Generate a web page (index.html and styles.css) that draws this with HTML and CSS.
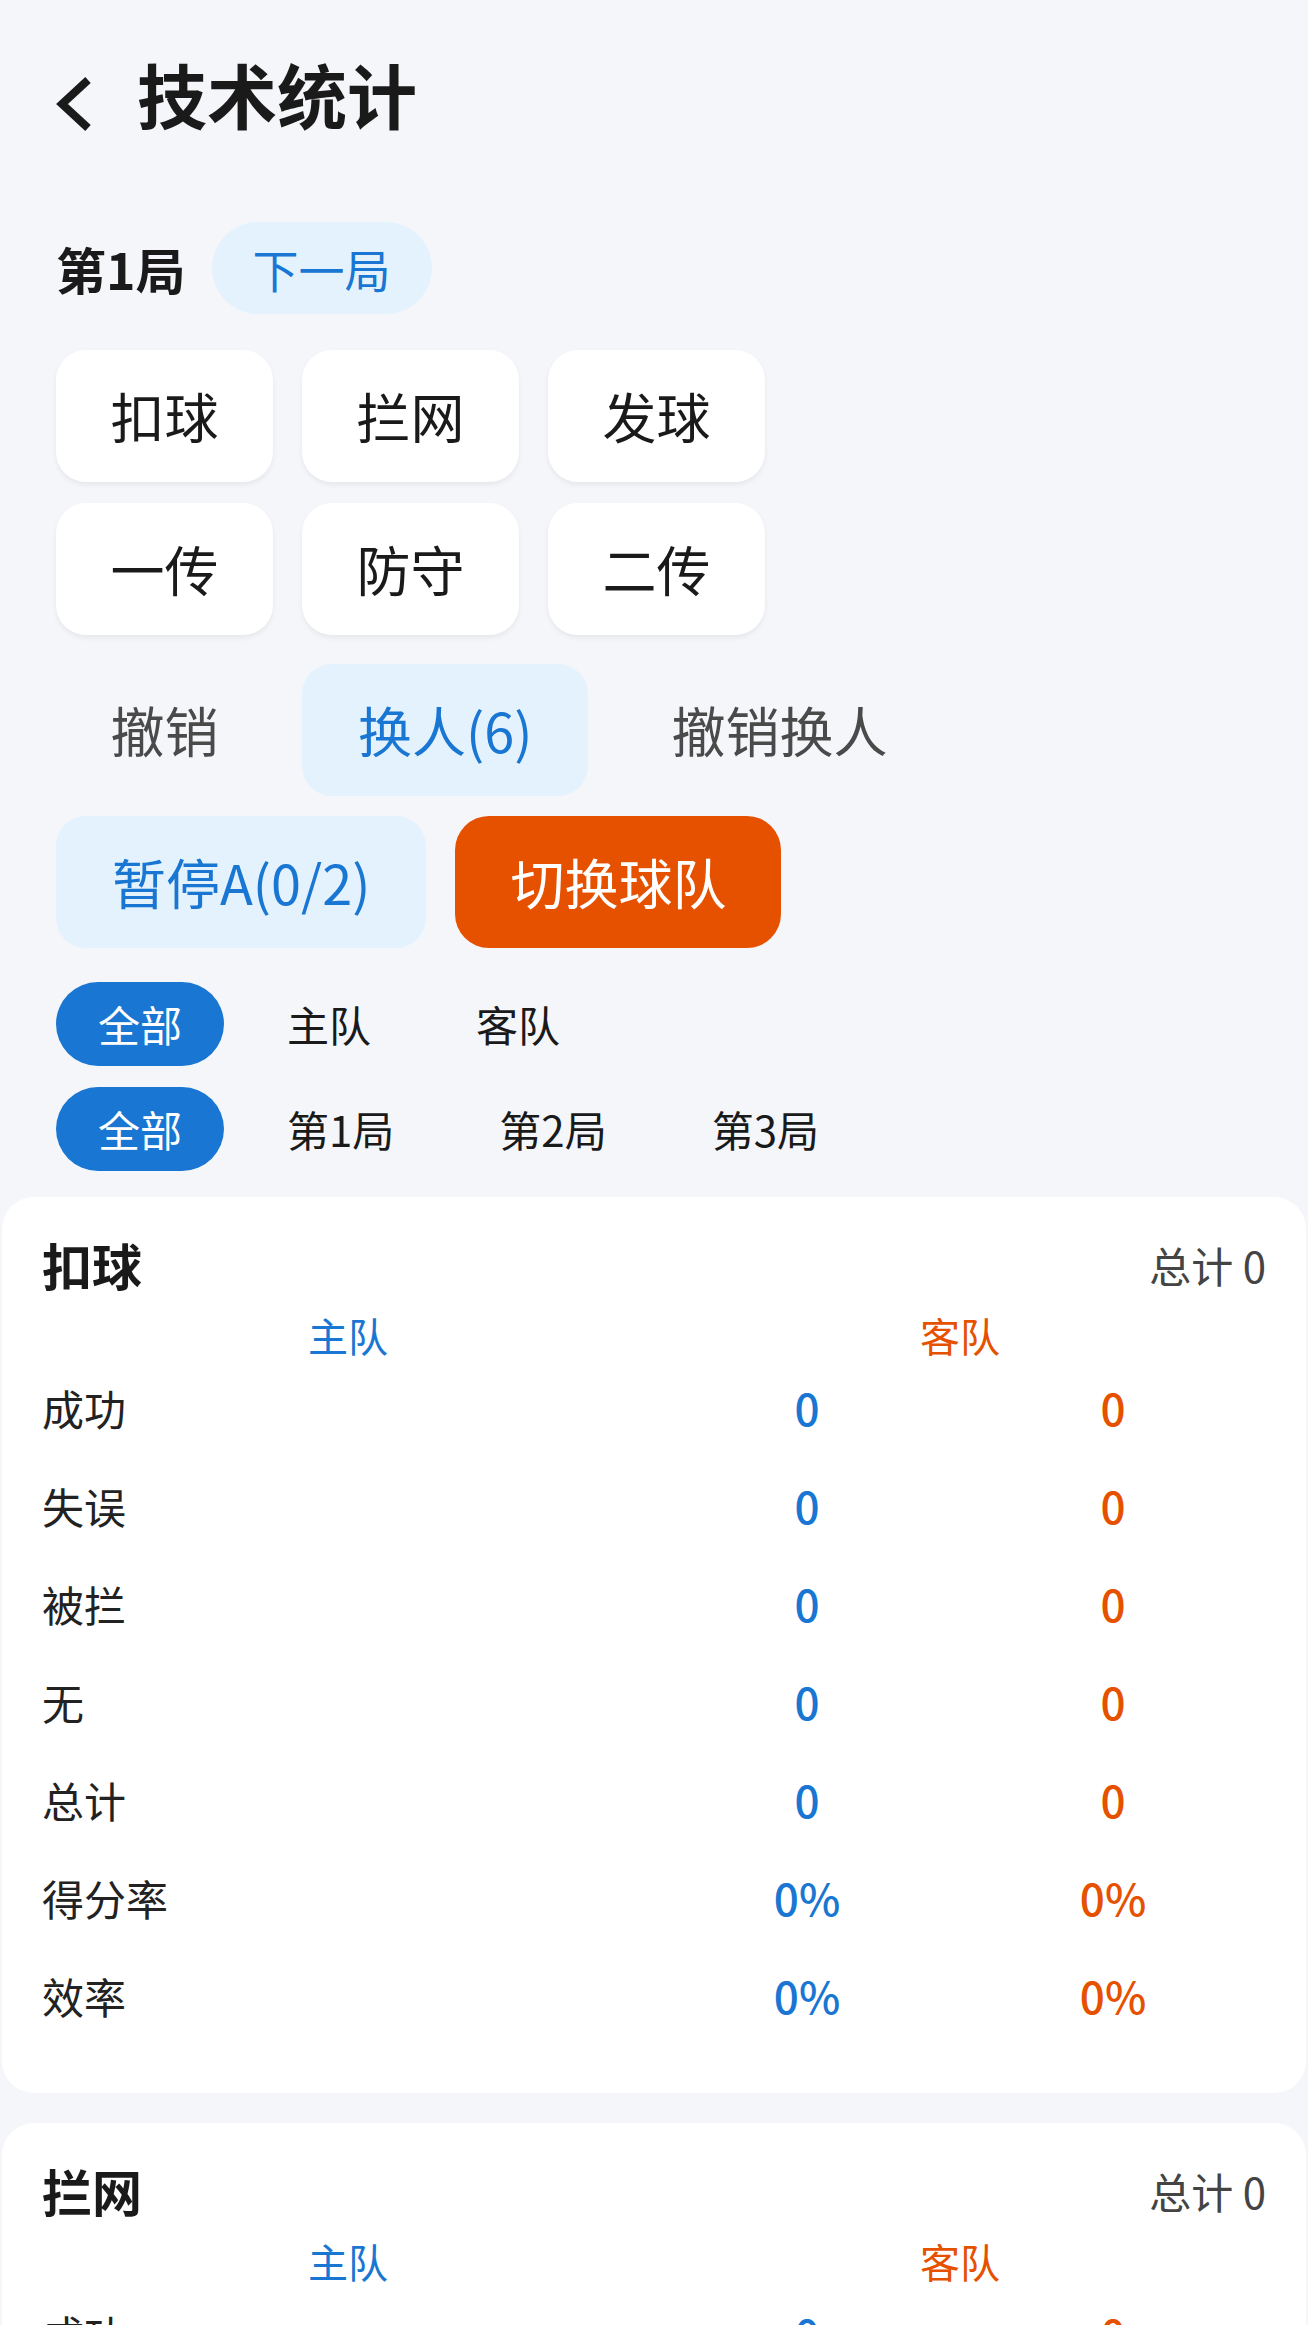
FILE: index.html
```html
<!DOCTYPE html>
<html lang="zh-CN">
<head>
<meta charset="utf-8">
<title>技术统计</title>
<link rel="stylesheet" href="styles.css">
</head>
<body>
<header class="topbar">
  <svg class="back" width="36" height="88" viewBox="0 0 36 88" aria-hidden="true">
    <polyline points="32,30 6,54 32,78" fill="none" stroke="#1a1a1a" stroke-width="8" stroke-linejoin="miter" stroke-linecap="butt"/>
  </svg>
  <h1 class="title">技术统计</h1>
</header>

<section class="round">
  <span class="round-label">第1局</span>
  <span class="pill-next">下一局</span>
</section>

<section class="actions">
  <div class="btn-row row1">
    <div class="btn card-btn">扣球</div>
    <div class="btn card-btn">拦网</div>
    <div class="btn card-btn">发球</div>
  </div>
  <div class="btn-row row2">
    <div class="btn card-btn">一传</div>
    <div class="btn card-btn">防守</div>
    <div class="btn card-btn">二传</div>
  </div>
  <div class="btn-row row3">
    <div class="btn plain-btn fixed">撤销</div>
    <div class="btn light-btn">换人(6)</div>
    <div class="btn plain-btn">撤销换人</div>
  </div>
  <div class="btn-row row4">
    <div class="btn light-btn">暂停A(0/2)</div>
    <div class="btn orange-btn">切换球队</div>
  </div>
</section>

<section class="filters">
  <div class="tab-row">
    <span class="tab active">全部</span>
    <span class="tab">主队</span>
    <span class="tab">客队</span>
  </div>
  <div class="tab-row second">
    <span class="tab active">全部</span>
    <span class="tab">第1局</span>
    <span class="tab">第2局</span>
    <span class="tab">第3局</span>
  </div>
</section>

<section class="stat-card">
  <div class="card-head">
    <span class="card-title">扣球</span>
    <span class="card-total">总计 0</span>
  </div>
  <div class="team-head">
    <span class="home">主队</span>
    <span class="away">客队</span>
  </div>
  <div class="stat-row"><span class="label">成功</span><span class="val home">0</span><span class="val away">0</span></div>
  <div class="stat-row"><span class="label">失误</span><span class="val home">0</span><span class="val away">0</span></div>
  <div class="stat-row"><span class="label">被拦</span><span class="val home">0</span><span class="val away">0</span></div>
  <div class="stat-row"><span class="label">无</span><span class="val home">0</span><span class="val away">0</span></div>
  <div class="stat-row"><span class="label">总计</span><span class="val home">0</span><span class="val away">0</span></div>
  <div class="stat-row"><span class="label">得分率</span><span class="val home">0%</span><span class="val away">0%</span></div>
  <div class="stat-row"><span class="label">效率</span><span class="val home">0%</span><span class="val away">0%</span></div>
</section>

<section class="stat-card">
  <div class="card-head">
    <span class="card-title">拦网</span>
    <span class="card-total">总计 0</span>
  </div>
  <div class="team-head">
    <span class="home">主队</span>
    <span class="away">客队</span>
  </div>
  <div class="stat-row"><span class="label">成功</span><span class="val home">0</span><span class="val away">0</span></div>
  <div class="stat-row"><span class="label">失误</span><span class="val home">0</span><span class="val away">0</span></div>
  <div class="stat-row"><span class="label">无</span><span class="val home">0</span><span class="val away">0</span></div>
  <div class="stat-row"><span class="label">总计</span><span class="val home">0</span><span class="val away">0</span></div>
</section>
</body>
</html>
```

FILE: styles.css
```css
* { box-sizing: border-box; }

html, body {
  margin: 0;
  padding: 0;
  background: #f5f6fa;
}

body {
  font-family: "Noto Sans CJK SC", "Noto Sans", sans-serif;
  color: #1a1a1a;
  padding-bottom: 40px;
}

.topbar {
  display: flex;
  align-items: center;
  height: 138px;
  padding: 50px 56px 0;
}

.back {
  display: block;
  flex: none;
}

.title {
  margin: 0 0 0 45px;
  font-size: 70px;
  line-height: 88px;
  font-weight: 700;
  color: #1a1a1a;
}

.round {
  display: flex;
  align-items: center;
  margin-top: 84px;
  padding: 0 56px;
  height: 92px;
}

.round-label {
  font-size: 50px;
  font-weight: 700;
  line-height: 92px;
  color: #1a1a1a;
}

.pill-next {
  margin-left: 26px;
  height: 92px;
  line-height: 92px;
  padding: 0 41px;
  border-radius: 46px;
  background: #e3f2fd;
  color: #1976d2;
  font-size: 46px;
}

.actions {
  margin-top: 36px;
  padding: 0 56px;
}

.btn-row {
  display: flex;
  gap: 29px;
}

.row2 { margin-top: 21px; }
.row3 { margin-top: 29px; }
.row4 { margin-top: 20px; }

.btn {
  height: 132px;
  line-height: 132px;
  font-size: 54px;
  padding: 0 56px;
  border-radius: 30px;
  text-align: center;
  white-space: nowrap;
}

.card-btn {
  width: 217px;
  padding: 0;
  background: #ffffff;
  color: #1a1a1a;
  box-shadow: 0 3px 5px rgba(0, 0, 0, 0.06);
}

.plain-btn {
  color: #4a4a4a;
  padding: 0 54px;
}

.plain-btn.fixed {
  width: 217px;
  padding: 0;
}

.light-btn {
  background: #e3f2fd;
  color: #1976d2;
}

.orange-btn {
  background: #e65100;
  color: #ffffff;
  padding: 0 55px;
  border-radius: 34px;
}

.filters {
  margin-top: 34px;
  padding: 0 56px;
}

.tab-row {
  display: flex;
  gap: 21px;
}

.tab-row.second { margin-top: 21px; }

.tab {
  height: 84px;
  line-height: 84px;
  padding: 0 42px;
  border-radius: 42px;
  font-size: 42px;
  color: #1a1a1a;
  white-space: nowrap;
}

.tab.active {
  background: #1976d2;
  color: #ffffff;
}

.stat-card {
  margin: 26px 2px 0;
  padding: 37px 40px 49px;
  background: #ffffff;
  border-radius: 32px;
}

.stat-card + .stat-card {
  margin-top: 30px;
}

.card-head {
  display: flex;
  justify-content: space-between;
  align-items: center;
  height: 60px;
}

.card-title {
  font-size: 50px;
  font-weight: 700;
  color: #1a1a1a;
}

.card-total {
  font-size: 42px;
  color: #444444;
}

.team-head {
  display: flex;
  margin-top: 18px;
  height: 46px;
  line-height: 46px;
  font-size: 40px;
}

.team-head span {
  flex: 1;
  text-align: center;
}

.home { color: #1976d2; }
.away { color: #e65100; }

.stat-row {
  display: grid;
  grid-template-columns: 2fr 1fr 1fr;
  align-items: center;
  height: 98px;
}

.label {
  font-size: 42px;
  color: #222222;
}

.val {
  text-align: center;
  font-size: 44px;
  font-weight: 500;
}
```
